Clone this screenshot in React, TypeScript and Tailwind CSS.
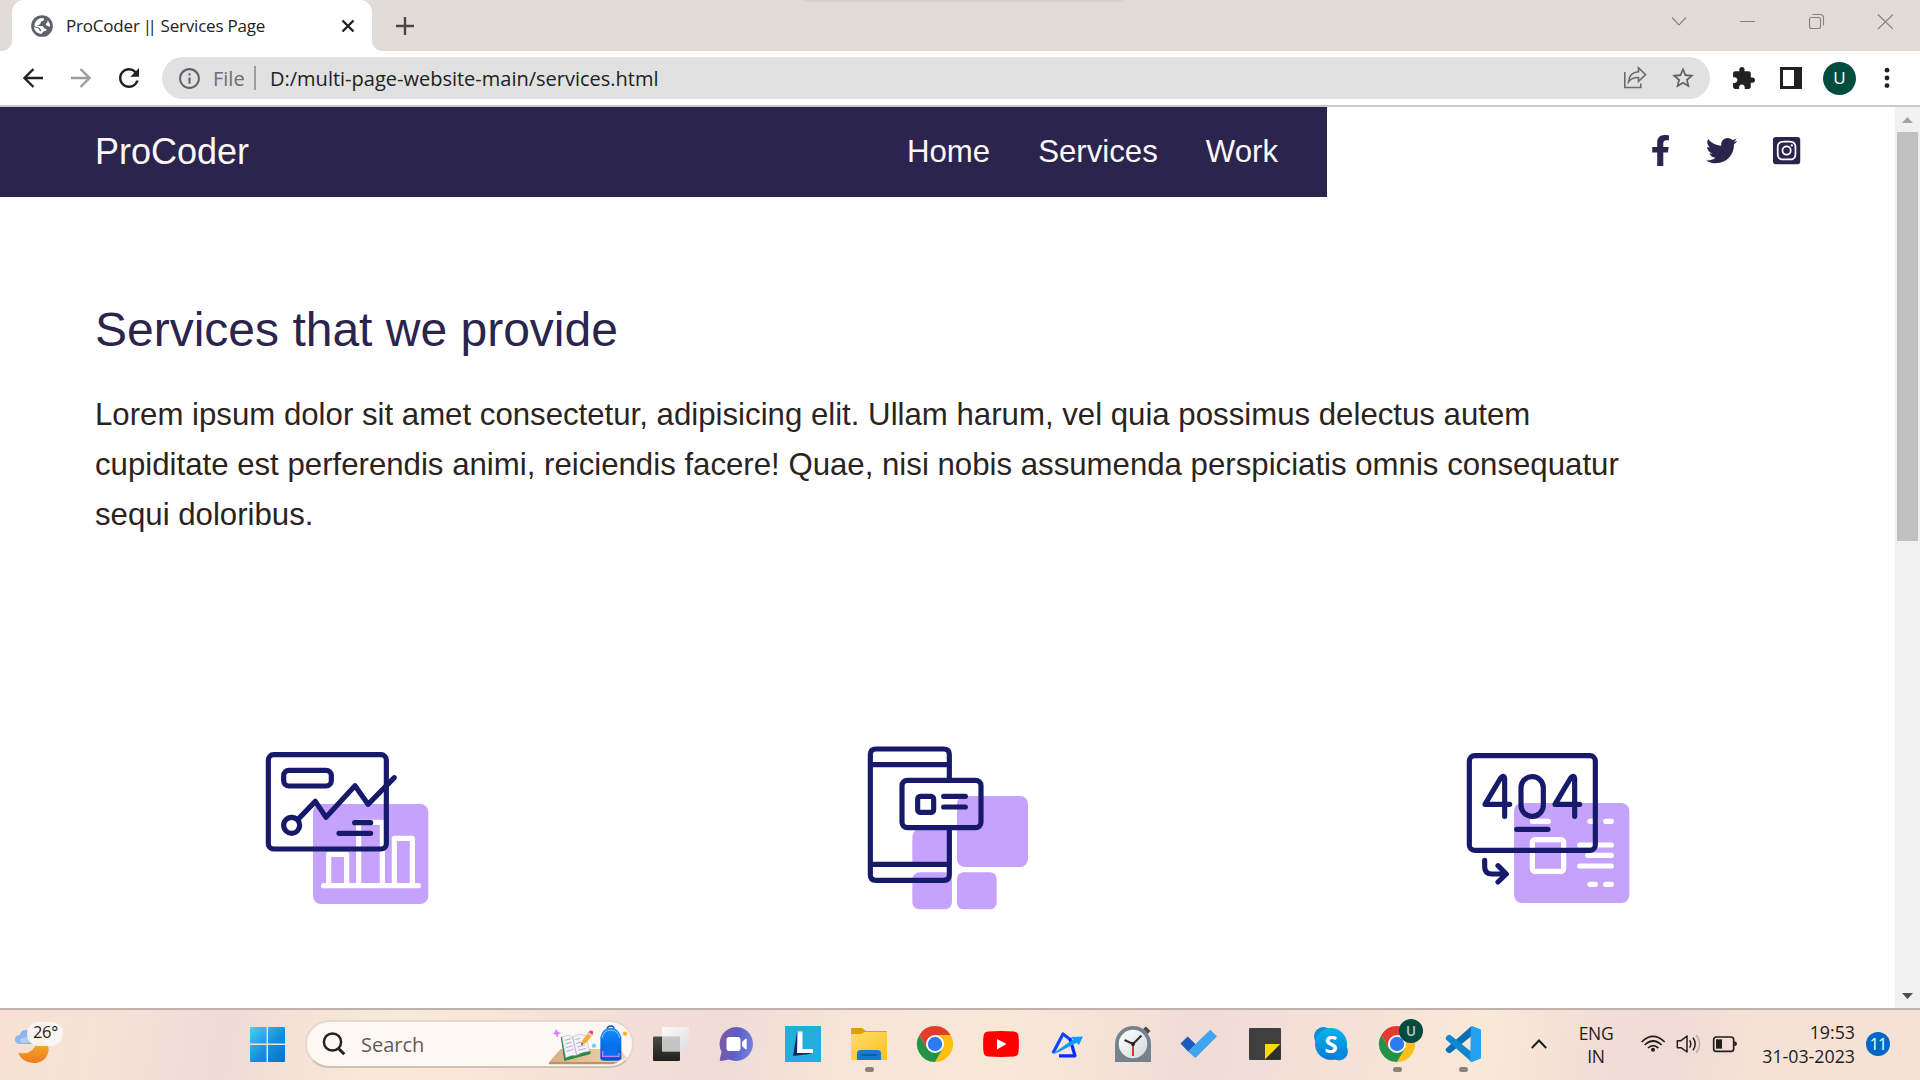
import React from "react";
import { FaFacebookF, FaTwitter, FaInstagramSquare } from "react-icons/fa";
import { MdExtension, MdInfoOutline, MdRefresh, MdStarBorder } from "react-icons/md";

const Globe = () => (
  <svg className="h-[22px] w-[22px] shrink-0" viewBox="93 44 66 66">
    <circle cx="126" cy="77" r="32.5" fill="#5f6368" />
    <g transform="translate(126 77) scale(0.9) translate(-126 -77)" fill="#fff">
      <path d="M101 74 C102 60 113 51 126 50 L133 52 C134 59 128 61 123 62 L120 70 C116 74 112 73 110 77 L128 77 C131 79 131 84 136 86 C142 85 143 91 137 94 L130 95 C125 101 128 103 122 103 C110 101 101 93 99 81 L112 84 C117 87 116 93 121 95 L124 89 C118 88 121 83 113 81 L101 79 Z" />
      <path d="M144 58 C150 64 153 71 153 78 C149 80 147 76 142 76 C137 74 138 67 144 66 Z" />
    </g>
  </svg>
);

const TabStrip = () => (
  <div className="flex h-[51px] bg-white">
    <div className="w-3 rounded-br-[10px] bg-[#e3dbd8]" />
    <div className="w-[360px] bg-[#e3dbd8]">
      <div className="flex h-full items-center rounded-t-[12px] bg-white pl-[19px]">
        <Globe />
        <div className="ml-[13px] flex w-[260px] items-center text-[17px] leading-6 tracking-[-0.2px] text-[#202124]">
          <span>ProCoder</span>
          <span className="ml-[3px] tracking-[-4.4px]">||</span>
          <span className="ml-[8px]">Services Page</span>
        </div>
        <svg className="ml-[15px] h-[14px] w-[14px]" viewBox="0 0 14 14" stroke="#202124" strokeWidth="2.4">
          <path d="M1.5 1.5 12.5 12.5M12.5 1.5 1.5 12.5" />
        </svg>
      </div>
    </div>
    <div className="flex flex-1 items-center rounded-bl-[10px] bg-[#e3dbd8] pl-[24px]">
      <svg className="h-[18px] w-[18px]" viewBox="0 0 18 18" stroke="#474747" strokeWidth="2.4">
        <path d="M9 0V18M0 9H18" />
      </svg>
      <div className="ml-[389px] h-[2px] w-[320px] self-start rounded-b bg-[#dad2cf]" />
      <svg className="mb-[9px] ml-auto mr-[27px] h-[20px] w-[224px]" viewBox="0 0 224 20" fill="none" stroke="#857f7d" strokeWidth="1.1">
        <path d="M3 6.5 10 14 17 6.5M71 10.5H86M209 3.5 224 18M224 3.5 209 18" />
        <rect x="140.5" y="6.5" width="11" height="11" rx="2" />
        <path d="M143.500 3.500H151C153 3.500 154.500 5 154.500 7V14.500" />
      </svg>
    </div>
  </div>
);

const Toolbar = () => (
  <div className="flex h-[56px] items-center border-b-2 border-[#c9c9c9] bg-white">
    <svg className="ml-[23px] h-[20px] w-[20px]" viewBox="0 0 20 20" fill="none" stroke="#202124" strokeWidth="2.3">
      <path d="M20 10H1.500M10.500 1 1.500 10 10.500 19" />
    </svg>
    <svg className="ml-[28px] h-[20px] w-[20px]" viewBox="0 0 20 20" fill="none" stroke="#9b9b9c" strokeWidth="2.3">
      <path d="M0 10H18.500M9.500 1 18.500 10 9.500 19" />
    </svg>
    <MdRefresh className="ml-[23px] text-[30px] text-[#202124]" />
    <div className="ml-[18px] flex h-[42px] w-[1548px] items-center rounded-full bg-[#e1e1e1] pl-[15px] text-[20px]">
      <MdInfoOutline className="text-[25px] text-[#5f6368]" />
      <span className="ml-[11px] mt-px w-[34px] text-[#6b6e71]">File</span>
      <span className="ml-[7px] h-6 w-[2px] bg-[#9a9b9c]" />
      <span className="ml-[14px] mt-px text-[#202124]">D:/multi-page-website-main/services.html</span>
      <svg className="ml-auto h-[24px] w-[24px]" viewBox="0 0 24 24" fill="none" stroke="#6b6b6b" strokeWidth="1.6">
        <path d="M1.800 6V21.500H17.800V17.500" />
        <path d="M15.500 1.800 22.500 8.800 15.500 15.300V11.500C11 11.200 8 12.500 5.500 16C6 10 9.500 6 15.500 5.700Z" />
      </svg>
      <MdStarBorder className="ml-[23px] mr-[14px] text-[26px] text-[#5f6368]" />
    </div>
    <MdExtension className="ml-[21px] text-[25px] text-[#202124]" />
    <svg className="ml-[24px] h-[22px] w-[22px]" viewBox="0 0 22 22">
      <path fill="#202124" fillRule="evenodd" d="M0 0H22V22H0ZM3 3V19H14V3Z" />
    </svg>
    <span className="ml-[21px] flex h-[33px] w-[33px] items-center justify-center rounded-full bg-[#004d40] text-[17px] text-white">U</span>
    <svg className="ml-[28px] h-[22px] w-[6px]" viewBox="0 0 6 22" fill="#202124">
      <circle cx="3" cy="3.200" r="2.400" />
      <circle cx="3" cy="11" r="2.400" />
      <circle cx="3" cy="18.600" r="2.400" />
    </svg>
  </div>
);

const SiteHeader = () => (
  <header className="flex h-[90px]">
    <div className="flex w-[1327px] items-center bg-[#2b244d] pl-[95px] text-[#fdf8f8]">
      <span className="text-[36px] leading-[90px]">ProCoder</span>
      <nav className="-mt-px ml-auto mr-[49px] flex gap-[48px] text-[31.2px] leading-[90px]">
        <a>Home</a>
        <a>Services</a>
        <a>Work</a>
      </nav>
    </div>
    <div className="-mt-[3px] flex items-center pl-[317.5px] text-[31.2px] text-[#2b244d]">
      <FaFacebookF />
      <FaTwitter className="ml-[30.5px]" />
      <FaInstagramSquare className="ml-[34px]" />
    </div>
  </header>
);

const ChartArt = () => (
  <svg className="h-[200px] w-[220px]" viewBox="0 0 660 600" fill="none" strokeWidth="15.500" strokeLinecap="round" strokeLinejoin="round">
    <rect x="219" y="222" width="346" height="300" rx="24" fill="#c5a2fc" />
    <g stroke="#fff">
      <path d="M251 467H535" />
      <path d="M266 460V373H320V460M356 460V277H427V460M463 460V325H517V460" />
    </g>
    <g stroke="#171a6b">
      <rect x="85" y="74" width="354" height="283" rx="16" />
      <rect x="131" y="121" width="143" height="47" rx="16" />
      <circle cx="155" cy="286" r="24" />
      <path d="M174 268 226 214 258 262 345 167 384 223 463 143M344 278H392M297 310H392" />
    </g>
  </svg>
);

const PhoneArt = () => (
  <svg className="h-[200px] w-[200px]" viewBox="0 0 600 600" fill="none" strokeWidth="15.500" strokeLinecap="round" strokeLinejoin="round">
    <g fill="#c5a2fc">
      <rect x="321" y="198" width="213" height="213" rx="24" />
      <path d="M187 322Q187 302 206 296H306V405H187Z" />
      <rect x="187" y="427" width="119" height="111" rx="22" />
      <rect x="321" y="427" width="119" height="111" rx="20" />
    </g>
    <g stroke="#171a6b">
      <path d="M298 150V74Q298 57 281 57H78Q61 57 61 74V435Q61 451 78 451H281Q298 451 298 435V296M63 104H296M63 403H296" />
      <rect x="156" y="151" width="237" height="142" rx="16" />
      <rect x="203" y="199" width="48" height="48" rx="8" />
      <path d="M281 199H346M281 231H346" />
    </g>
  </svg>
);

const NotFoundArt = () => (
  <svg className="h-[200px] w-[220px]" viewBox="0 0 660 600" fill="none" strokeWidth="15.500" strokeLinecap="round" strokeLinejoin="round">
    <rect x="222" y="219" width="346" height="300" rx="24" fill="#c5a2fc" />
    <g stroke="#fff">
      <path d="M277 274H325M450 274H466M497 274H514M419 345H514M443 376H514M419 408H514M450 463H466M497 463H514" />
      <rect x="277" y="329" width="94" height="95" rx="8" />
    </g>
    <g stroke="#171a6b">
      <rect x="88" y="77" width="378" height="284" rx="16" />
      <path d="M209 223H135L182 144Q193 133 194 147V259M419 223H345L392 144Q403 133 404 147V259" />
      <rect x="243" y="140" width="67" height="119" rx="33" />
      <path d="M230 298H324M134 391V410Q134 432 156 432H198M174 407 199 432 174 456" />
    </g>
  </svg>
);

const Page = () => (
  <div className="flex h-[901px] bg-white">
    <main className="w-[1895px] font-['Liberation_Sans',Arial,sans-serif]">
      <SiteHeader />
      <div className="pl-[95px] pt-[103px]">
        <h1 className="text-[48px] leading-[60px] text-[#2b244d]">Services that we provide</h1>
        <p className="mt-[30px] text-[31.2px] leading-[50px] text-[#2b231e]">
          Lorem ipsum dolor sit amet consectetur, adipisicing elit. Ullam harum, vel quia possimus delectus autem
          <br />
          cupiditate est perferendis animi, reiciendis facere! Quae, nisi nobis assumenda perspiciatis omnis consequatur
          <br />
          sequi doloribus.
        </p>
      </div>
      <div className="mt-[190px] flex gap-[390px] pl-[240px]">
        <ChartArt />
        <PhoneArt />
        <NotFoundArt />
      </div>
    </main>
    <div className="flex w-[25px] flex-col items-center bg-[#f1f1f1]">
      <svg className="h-[25px] w-[25px]" viewBox="0 0 25 25">
        <path d="M7 16H18L12.500 10Z" fill="#a3a3a3" />
      </svg>
      <div className="mr-[1px] h-[409px] w-[21px] bg-[#c1c1c1]" />
      <svg className="mt-auto h-[25px] w-[25px]" viewBox="0 0 25 25">
        <path d="M7 10H18L12.500 16Z" fill="#505050" />
      </svg>
    </div>
  </div>
);

const TaskCell = ({ running, children }: { running?: boolean; children: React.ReactNode }) => (
  <div className="relative flex h-full w-[66px] shrink-0 items-center justify-center">
    <svg className="h-[36px] w-[36px] overflow-visible" viewBox="0 0 36 36">{children}</svg>
    {running && <span className="absolute bottom-[6px] left-[29px] h-[5px] w-[9px] rounded-full bg-[#8c817b]" />}
  </div>
);

const ChromeLogo = () => (
  <>
    <path d="M33.590 9A18 18 0 0 1 18 36L25.800 22.500 18 9Z" fill="#fdc010" />
    <path d="M2.410 9A18 18 0 0 0 18 36L25.800 22.500 18 18 10.200 22.500Z" fill="#259347" />
    <path d="M2.410 9 10.200 22.500 18 9H33.590A18 18 0 0 0 2.410 9Z" fill="#e33b2e" />
    <circle cx="18" cy="18" r="9" fill="#fff" />
    <circle cx="18" cy="18" r="7.200" fill="#2f7af2" />
  </>
);

const SearchArt = () => (
  <svg className="ml-auto h-[42px] w-[84px]" viewBox="444 100 252 126">
    <defs>
      <linearGradient id="desk" x1="0" y1="0" x2="1" y2="0">
        <stop offset="0" stopColor="#d5af86" />
        <stop offset="1" stopColor="#f0d5ae" />
      </linearGradient>
      <linearGradient id="bag" x1="0" y1="0" x2="0" y2="1">
        <stop offset="0" stopColor="#0a93ff" />
        <stop offset="1" stopColor="#0550d8" />
      </linearGradient>
    </defs>
    <path d="M482 178H660L680 205 650 218H447Z" fill="url(#desk)" />
    <path d="M447 217H655L640 224H447Z" fill="#c09268" />
    <path d="M484 142 494 212 570 192 570 184 498 202Z" fill="#238a45" stroke="#238a45" strokeWidth="3" />
    <path d="M486 142Q505 133 518 142Q535 130 556 137L569 185Q545 187 530 197Q515 196 497 204Z" fill="#f4f2fb" stroke="#aaa6bd" strokeWidth="1.500" />
    <path d="M518 142 530 197M494 152 513 147M496 163 516 157M498 174 518 168M500 185 521 179M526 150 540 146M529 161 545 157M532 172 555 166M534 182 558 176" stroke="#8f8ba5" strokeWidth="2" />
    <path d="M543 166 548 151 566 128 577 137 559 159Z" fill="#ffad2d" />
    <path d="M564 129 569 123Q580 121 580 130L576 138Z" fill="#ee4d4e" />
    <path d="M562 132 566 127 578 136 574 141Z" fill="#cdd3e6" />
    <path d="M543 166 545 159 550 163Z" fill="#333" />
    <path d="M622 118Q622 109 632 109Q642 109 642 118" fill="none" stroke="#164db0" strokeWidth="4" />
    <path d="M601 206V143Q606 116 632 114Q658 116 664 143V206Q662 213 652 213H613Q602 213 601 206Z" fill="url(#bag)" />
    <path d="M606 145Q610 122 632 121Q655 122 659 145" fill="none" stroke="#9db8ff" strokeWidth="3" />
    <path d="M609 188Q612 165 632 165Q652 165 656 188V203H609Z" fill="#0872ed" />
    <path d="M608 184V200H657V190" fill="none" stroke="#bd85ff" strokeWidth="4" />
    <path d="M468 117 474 127 484 130 475 134 473 144 467 135 458 131 465 127Z" fill="#df80fb" />
    <circle cx="582" cy="168" r="6.500" fill="#6dd4e2" />
    <circle cx="675" cy="132" r="6.500" fill="#ffb10a" />
  </svg>
);

const Taskbar = () => (
  <div className="flex h-[72px] items-center border-t-2 border-[#c0b3ad] bg-[linear-gradient(100deg,#f8e1d4_0%,#f5e3d7_5%,#eedbd6_12%,#f3e1d6_15%,#f8e9d7_20%,#f8e6d8_25%,#f3dfd7_32%,#f0dcd6_38%,#f6e5d8_44%,#f8e8d8_52%,#f5e2d7_58%,#f0dcd6_62%,#f5e1d7_70%,#f9e9d8_77%,#f3dfd6_82%,#f0dbd6_86%,#f6e2d5_92%,#f5e1d5_100%)] pb-[2px] text-[#1f1b1a]">
    <div className="flex w-[234px] items-center pl-[14px]">
      <div className="relative -mt-[3px] h-[42px] w-[50px]">
        <svg className="h-[42px] w-[50px]" viewBox="42 84 150 126">
          <defs>
            <linearGradient id="moon" x1="0" y1="0" x2="0" y2="1">
              <stop offset="0" stopColor="#fbd24b" />
              <stop offset="0.400" stopColor="#f4a02b" />
              <stop offset="1" stopColor="#ee7b1c" />
            </linearGradient>
          </defs>
          <path d="M118 128Q150 150 146 170Q138 207 100 207Q66 205 54 176Q98 186 110 145Z" fill="url(#moon)" />
          <path d="M57 150Q45 148 45 136Q46 124 59 123Q64 107 79 108Q92 108 96 124V150Z" fill="#8fb4ee" />
          <path d="M60 136Q75 125 96 134V146H62Z" fill="#b5cdf5" />
        </svg>
        <span className="absolute left-[13px] top-0 flex h-6 w-[36px] items-center justify-center rounded-full bg-[#fbf7f4]/90 pb-[3px] pl-[1px] text-[16.500px] leading-5 tracking-[-0.300px]">26°</span>
      </div>
    </div>
    <TaskCell>
      <defs>
        <linearGradient id="win" gradientUnits="userSpaceOnUse" x1="1" y1="1" x2="35" y2="35">
          <stop offset="0" stopColor="#4ccbfb" />
          <stop offset="0.550" stopColor="#1490df" />
          <stop offset="1" stopColor="#0572d0" />
        </linearGradient>
      </defs>
      <path fill="url(#win)" d="M2 1H17.500V17.500H1V2Q1 1 2 1ZM19 1H35Q36 1 36 2V17.500H19ZM1 19H17.500V36H2Q1 36 1 35ZM19 19H36V35Q36 36 35 36H19Z" />
    </TaskCell>
    <div className="ml-[5px] flex h-[48px] w-[329px] items-center rounded-full border-2 border-[#e6d8cf] border-b-[#cfc1b4] bg-[#fdf8f4] pl-[15px]">
      <svg className="h-[24px] w-[24px]" viewBox="0 0 24 24" fill="none" stroke="#222" strokeWidth="2.500">
        <circle cx="10.500" cy="10" r="8.600" />
        <path d="M16.500 16.500 22.300 22.300" strokeWidth="3" />
      </svg>
      <span className="ml-[15px] mt-px text-[20px] text-[#5e5b59]">Search</span>
      <SearchArt />
    </div>
    <div className="ml-[4px] flex h-full">
      <TaskCell>
        <defs>
          <linearGradient id="glass" x1="0" y1="0" x2="1" y2="1">
            <stop offset="0" stopColor="#fff" />
            <stop offset="1" stopColor="#dcdcdc" />
          </linearGradient>
          <linearGradient id="dark" x1="0" y1="0" x2="0" y2="1">
            <stop offset="0" stopColor="#4a4a47" />
            <stop offset="1" stopColor="#20201e" />
          </linearGradient>
        </defs>
        <rect x="0" y="10.500" width="27" height="24.500" rx="1.200" fill="url(#dark)" />
        <rect x="9" y="1" width="27" height="24.500" rx="1" fill="url(#glass)" fillOpacity="0.900" />
        <path d="M9 10.500H27V25.500H9Z" fill="#bdbdbd" fillOpacity="0.750" />
      </TaskCell>
      <TaskCell>
        <defs>
          <linearGradient id="teams" x1="0" y1="0.300" x2="1" y2="0.500">
            <stop offset="0" stopColor="#83599f" />
            <stop offset="0.500" stopColor="#5e5cc6" />
            <stop offset="1" stopColor="#6f83e0" />
          </linearGradient>
        </defs>
        <path d="M17.500 1A17 17 0 1 1 10 33.500L2 35Q.300 35 .800 33.200L2.500 26A17 17 0 0 1 17.500 1Z" fill="url(#teams)" />
        <rect x="7.500" y="11" width="14" height="14" rx="2.800" fill="#fff" />
        <path d="M23 16 26.500 12.800Q27.700 12.500 27.700 13.500V22.500Q27.700 23.500 26.500 23.200L23 20Z" fill="#fff" />
      </TaskCell>
      <TaskCell>
        <rect width="36" height="36" fill="#24addb" />
        <path d="M12 6 8 30 24 28 27 27 14 25 15 6Z" fill="#07286c" />
        <path d="M12.500 5.500H17.500V23H28V27H12Z" fill="#fff" />
      </TaskCell>
      <TaskCell running>
        <defs>
          <linearGradient id="folder" x1="0" y1="0" x2="1" y2="1">
            <stop offset="0" stopColor="#ffdc6c" />
            <stop offset="1" stopColor="#fcc21d" />
          </linearGradient>
        </defs>
        <path d="M0 3Q0 2 1 2H11L15 5H35Q36 5 36 6V14H0Z" fill="#dda006" />
        <path d="M0 9Q0 8 1 8H10L14 6H36V33.500Q36 34 35 34H1Q0 34 0 33Z" fill="url(#folder)" />
        <path d="M6 34V27.500Q6 24 9.500 24H26.500Q30 24 30 27.500V34Z" fill="#117ccd" />
        <path d="M11 29H25" stroke="#08519a" strokeWidth="1.500" strokeLinecap="round" />
      </TaskCell>
      <TaskCell>
        <ChromeLogo />
      </TaskCell>
      <TaskCell>
        <path d="M5 5.500Q18 4.700 31 5.500Q35 5.800 35.500 10Q36.300 18 35.500 26Q35 30.200 31 30.500Q18 31.300 5 30.500Q1 30.200.500 26Q-.300 18 .500 10Q1 5.800 5 5.500Z" fill="#fe0000" />
        <path d="M14 13V23.500L23.500 18Z" fill="#fff" />
      </TaskCell>
      <TaskCell>
        <g fill="none" strokeLinejoin="round">
          <path d="M4 27 14 8 22 14" stroke="#0a46fb" strokeWidth="3.200" />
          <path d="M21 13 26 29.800H10" stroke="#0a2bf8" strokeWidth="3.200" />
        </g>
        <path d="M2.500 28.500 24 13.500 22 11 34 10.500 30 19 27.500 16.800 10 26Z" fill="#0c9dfd" />
      </TaskCell>
      <TaskCell>
        <defs>
          <linearGradient id="face" x1="0" y1="0" x2="1" y2="1">
            <stop offset="0" stopColor="#fff" />
            <stop offset="1" stopColor="#d3d9dd" />
          </linearGradient>
        </defs>
        <path d="M28 3 31 .500 35.500 5 32.500 8Z" fill="#4d4d4d" />
        <path d="M0 36V18A18 18 0 0 1 36 18V36Z" fill="#75818b" />
        <circle cx="18" cy="18" r="14.300" fill="url(#face)" />
        <path d="M18 18V30" stroke="#d4400d" strokeWidth="2" />
        <path d="M9.500 14 18 18 26.500 9.500" fill="none" stroke="#353535" strokeWidth="2.200" />
        <circle cx="18" cy="18" r="2" fill="#222" />
      </TaskCell>
      <TaskCell>
        <path d="M0 17.500 6.700 11 14.300 18.500 7.500 25.300Z" fill="#195bbf" stroke="#195bbf" strokeLinejoin="round" />
        <path d="M7.500 25.300 29.300 4.300 35.500 10.300 14.300 31.500Z" fill="#40a4ee" stroke="#40a4ee" strokeLinejoin="round" />
      </TaskCell>
      <TaskCell>
        <rect x="2" y="2" width="32" height="32" rx="1" fill="#3f3f3f" />
        <path d="M18 18H33.500L18 33.500Z" fill="#ffd900" />
        <path d="M33.500 18V33.500H18Z" fill="#2e2e2e" />
      </TaskCell>
      <TaskCell>
        <defs>
          <linearGradient id="skype" x1="0" y1="0" x2="0" y2="1">
            <stop offset="0" stopColor="#05b3ee" />
            <stop offset="1" stopColor="#087bd8" />
          </linearGradient>
        </defs>
        <circle cx="10.500" cy="10.500" r="9.500" fill="#0a8dd3" />
        <circle cx="26" cy="25.500" r="9" fill="#0a88dc" />
        <circle cx="18" cy="18" r="16" fill="url(#skype)" />
        <text x="18" y="26.500" textAnchor="middle" fontSize="24" fontWeight="700" fill="#fff">S</text>
      </TaskCell>
      <TaskCell running>
        <ChromeLogo />
        <circle cx="32" cy="5" r="12" fill="#044c3f" />
        <text x="32" y="9.800" textAnchor="middle" fontSize="13.500" fontWeight="600" fill="#b7d0ca">U</text>
      </TaskCell>
      <TaskCell running>
        <path d="M26 .500V10.500L6 26.500Q4 28 2 26Q-.500 24 1.500 22Z" fill="#0b6fb8" />
        <path d="M26 35.500V25.500L6 9.500Q4 8 2 10Q-.500 12 1.500 14Z" fill="#1286cf" />
        <path d="M26 .500 27 0 36 3.500V32.500L27 36 25 35.500Z" fill="#26a0f2" />
      </TaskCell>
    </div>
    <svg className="ml-[35px] h-[10px] w-[16px]" viewBox="0 0 16 10" fill="none" stroke="#221e1d" strokeWidth="2">
      <path d="M.800 9 8 1.500 15.200 9" />
    </svg>
    <div className="ml-[29px] mt-[2px] w-[40px] text-center text-[17.500px] leading-[23px] tracking-[-0.300px]">
      <div>ENG</div>
      <div>IN</div>
    </div>
    <svg className="ml-[25px] h-[20px] w-[96px]" viewBox="243 162 288 60" fill="none" stroke="#221e1d" strokeWidth="5">
      <path d="M245 186Q279 152 314 186M254 195Q279 171 305 195M264 204Q279 190 295 204" />
      <circle cx="279" cy="209" r="6" fill="#221e1d" stroke="none" />
      <path d="M352 182H363L381 168V216L363 203H352Z" strokeLinejoin="round" strokeWidth="4.500" />
      <path d="M389 181Q396 192 389 203M399 173Q412 192 399 211" strokeWidth="4.500" />
      <path d="M409 165Q429 192 409 219" stroke="#b9aca7" strokeWidth="4" />
      <rect x="461" y="171" width="60" height="43" rx="8" />
      <rect x="468" y="178" width="18" height="28" fill="#221e1d" stroke="none" />
      <path d="M523 184V199Q531 198 531 191Q531 185 523 184Z" fill="#221e1d" stroke="none" />
    </svg>
    <div className="w-[118px] text-right text-[17.800px] leading-[24px]">
      <div>19:53</div>
      <div>31-03-2023</div>
    </div>
    <span className="ml-[11px] flex h-6 w-6 items-center justify-center rounded-full bg-[#0067c5] text-[16px] leading-5 tracking-[-0.800px] text-white">11</span>
  </div>
);

export default function App() {
  return (
    <div className="h-[1080px] w-[1920px] overflow-hidden whitespace-nowrap bg-white font-['Open_Sans','Noto_Sans',sans-serif]">
      <TabStrip />
      <Toolbar />
      <Page />
      <Taskbar />
    </div>
  );
}
